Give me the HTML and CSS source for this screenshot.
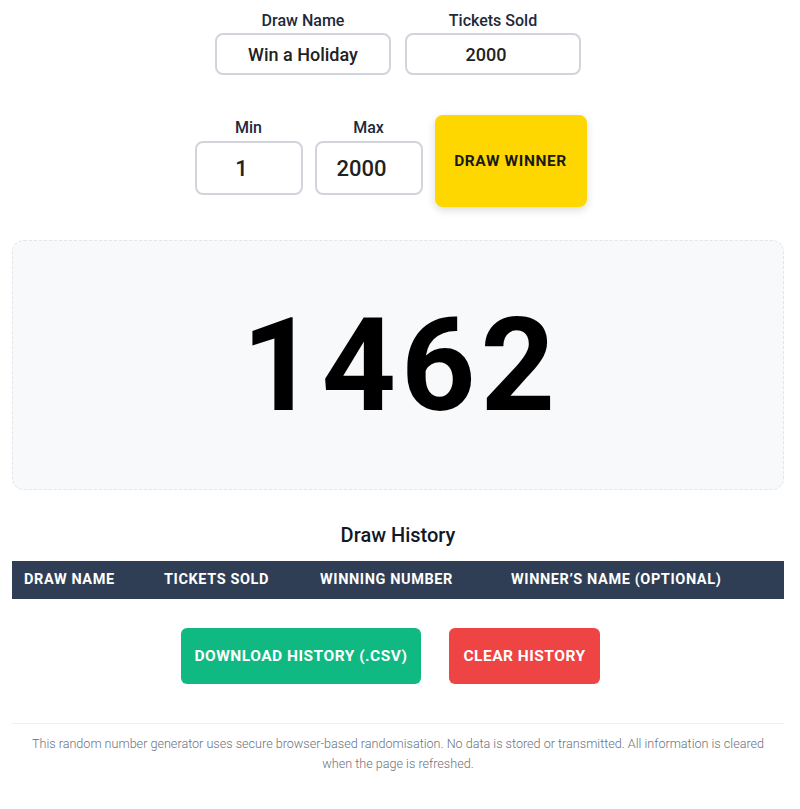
FILE: index.html
```html
<!DOCTYPE html>
<html lang="en">
<head>
    <meta charset="UTF-8">
    <meta name="viewport" content="width=device-width, initial-scale=1.0">
    <title>Random Number Draw</title>
    <link rel="stylesheet" href="styles.css">
</head>
<body>
    <div class="page">
        <div class="row row-top">
            <div class="field">
                <label for="draw-name">Draw Name</label>
                <input id="draw-name" class="input input-wide" type="text" value="Win a Holiday">
            </div>
            <div class="field">
                <label for="tickets">Tickets Sold</label>
                <input id="tickets" class="input input-wide input-number" type="text" value="2000">
            </div>
        </div>

        <div class="row row-range">
            <div class="field field-num">
                <label for="min">Min</label>
                <input id="min" class="input input-num input-number" type="text" value="1">
            </div>
            <div class="field field-num">
                <label for="max">Max</label>
                <input id="max" class="input input-num input-number" type="text" value="2000">
            </div>
            <button class="btn-draw">DRAW WINNER</button>
        </div>

        <div class="result">1462</div>

        <h2 class="history-title">Draw History</h2>
        <table class="history">
            <thead>
                <tr>
                    <th>Draw Name</th>
                    <th>Tickets Sold</th>
                    <th>Winning Number</th>
                    <th>Winner’s Name (Optional)</th>
                </tr>
            </thead>
            <tbody></tbody>
        </table>

        <div class="actions">
            <button class="btn btn-green">Download History (.CSV)</button>
            <button class="btn btn-red">Clear History</button>
        </div>

        <hr class="divider">
        <p class="note">This random number generator uses secure browser-based randomisation. No data is stored or transmitted. All information is cleared when the page is refreshed.</p>
    </div>
</body>
</html>
```

FILE: styles.css
```css
body {
    margin: 0;
    font-family: Roboto, "Liberation Sans", sans-serif;
    color: #1f2937;
    background-color: #fff;
}

.page {
    padding: 0 16px 0 12px;
}

.row {
    display: flex;
    justify-content: center;
}

.row-top {
    gap: 14px;
    padding-top: 12px;
}

.row-range {
    gap: 12px;
    margin-top: 40px;
    align-items: flex-start;
    padding-right: 15px;
}

.field {
    display: flex;
    flex-direction: column;
    align-items: center;
}

.field-num {
    padding-top: 4px;
}

.field label {
    font-size: 16px;
    font-weight: 500;
    color: #1e293b;
    margin-bottom: 3px;
    line-height: 18px;
}

.field-num label {
    margin-bottom: 4px;
}

.input {
    box-sizing: border-box;
    border: 2px solid #d1d5db;
    border-radius: 8px;
    text-align: center;
    font-family: inherit;
    font-weight: 500;
    color: #222;
    background: #fff;
}

.input-number {
    padding-right: 16px;
}

.input-wide {
    width: 176px;
    height: 42px;
    font-size: 18px;
}

.input-num {
    width: 108px;
    height: 54px;
    font-size: 22px;
}

.btn-draw {
    width: 152px;
    height: 92px;
    border: none;
    border-radius: 8px;
    background-color: #ffd700;
    color: #1a1a1a;
    font-family: inherit;
    font-size: 15.5px;
    font-weight: 700;
    letter-spacing: 0.6px;
    box-shadow: 0 3px 8px rgba(0, 0, 0, 0.15);
}

.result {
    margin-top: 33px;
    height: 248px;
    border: 1px dashed #e2e5ea;
    border-radius: 12px;
    background-color: #f8f9fb;
    display: flex;
    justify-content: center;
    align-items: center;
    padding-left: 6px;
    font-size: 130px;
    font-weight: 700;
    letter-spacing: 5px;
    color: #000;
}

.history-title {
    text-align: center;
    font-size: 20px;
    font-weight: 500;
    color: #111827;
    margin: 33px 0 14px;
}

.history {
    width: 100%;
    border-collapse: collapse;
}

.history th {
    background-color: #2f3e55;
    color: #fff;
    text-align: left;
    text-transform: uppercase;
    font-size: 14.5px;
    font-weight: 700;
    letter-spacing: 0.6px;
    padding: 11px 12px;
    line-height: 16px;
}

.history th:nth-child(1) { width: 116px; }
.history th:nth-child(2) { width: 132px; }
.history th:nth-child(3) { width: 167px; }

.actions {
    display: flex;
    justify-content: center;
    gap: 28px;
    margin-top: 29px;
    padding-right: 15px;
}

.btn {
    height: 56px;
    padding: 0 12px;
    border: none;
    border-radius: 6px;
    color: #fff;
    font-family: inherit;
    font-size: 15.5px;
    font-weight: 700;
    letter-spacing: 0.5px;
    text-transform: uppercase;
}

.btn-green {
    width: 240px;
    background-color: #10b981;
}

.btn-red {
    width: 151px;
    background-color: #ef4444;
}

.divider {
    border: none;
    border-top: 1px solid #eef0f2;
    margin: 39px 0 0;
}

.note {
    margin: 10px 0 0;
    padding: 0 12px;
    text-align: center;
    font-size: 12.6px;
    font-weight: 300;
    line-height: 20px;
    color: #6b7280;
}
```
